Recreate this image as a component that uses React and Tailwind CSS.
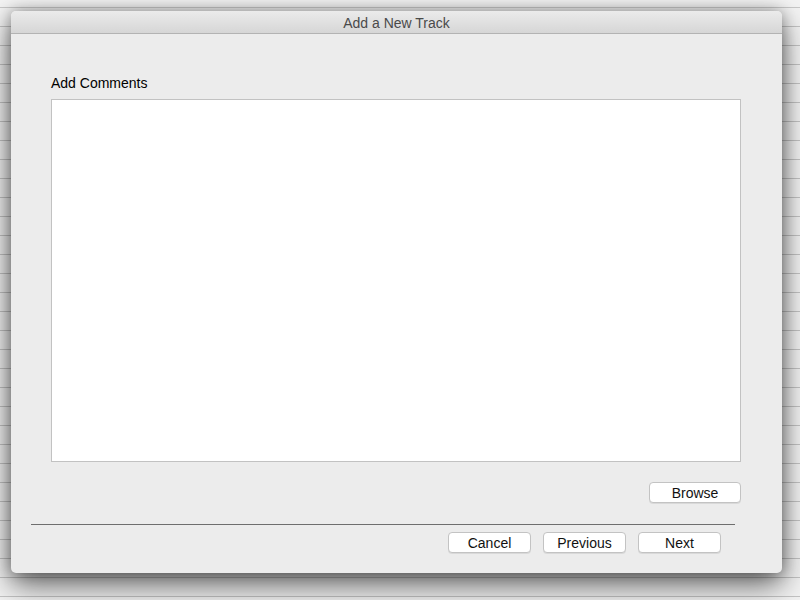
import React from "react";

const rows = Array.from({ length: 31 });

function MacButton({ children, wide }) {
  return (
    <button
      className={
        wide
          ? "h-[21px] w-[92px] rounded-[4px] border border-[#c3c3c3] bg-white text-[14px] leading-none text-[#111] shadow-[0_1px_0_rgba(0,0,0,0.08)]"
          : "h-[21px] w-[83px] rounded-[4px] border border-[#c3c3c3] bg-white text-[14px] leading-none text-[#111] shadow-[0_1px_0_rgba(0,0,0,0.08)]"
      }
    >
      {children}
    </button>
  );
}

export default function App() {
  return (
    <div className="relative h-[600px] w-[800px] overflow-hidden bg-[#f3f3f3] font-['Liberation_Sans',Arial,sans-serif]">
      {/* table rows behind the sheet */}
      <div className="flex flex-col">
        <div className="h-[8px] border-b border-[#c8c8c8]" />
        {rows.map((_, i) => (
          <div key={i} className="h-[19px] border-b border-[#c4c4c4]" />
        ))}
      </div>

      {/* sheet dialog */}
      <div className="absolute left-[11px] top-[11px] flex h-[562px] w-[771px] flex-col rounded-[5px] bg-[#ececec] shadow-[0_12px_30px_rgba(0,0,0,0.6),0_0_14px_rgba(0,0,0,0.3)]">
        <div className="flex h-[23px] items-center justify-center rounded-t-[5px] border-b border-[#b3b3b3] bg-gradient-to-b from-[#ebebeb] to-[#d6d6d6] pt-[3px] text-[14px] text-[#4a4a4a]">
          Add a New Track
        </div>

        <div className="flex flex-1 flex-col px-[40px] pt-[41px]">
          <div className="text-[14px] leading-[16px] text-black">Add Comments</div>
          <textarea className="mt-[8px] h-[363px] w-[690px] resize-none border border-[#c2c2c2] bg-white outline-none" />
          <div className="mt-[20px] flex w-[690px] justify-end">
            <MacButton wide>Browse</MacButton>
          </div>
        </div>

        <div className="ml-[20px] mt-[20px] w-[704px] border-t border-[#6e6e6e]" />
        <div className="flex gap-[12px] pb-[20px] pl-[437px] pt-[7px]">
          <MacButton>Cancel</MacButton>
          <MacButton>Previous</MacButton>
          <MacButton>Next</MacButton>
        </div>
      </div>
    </div>
  );
}
